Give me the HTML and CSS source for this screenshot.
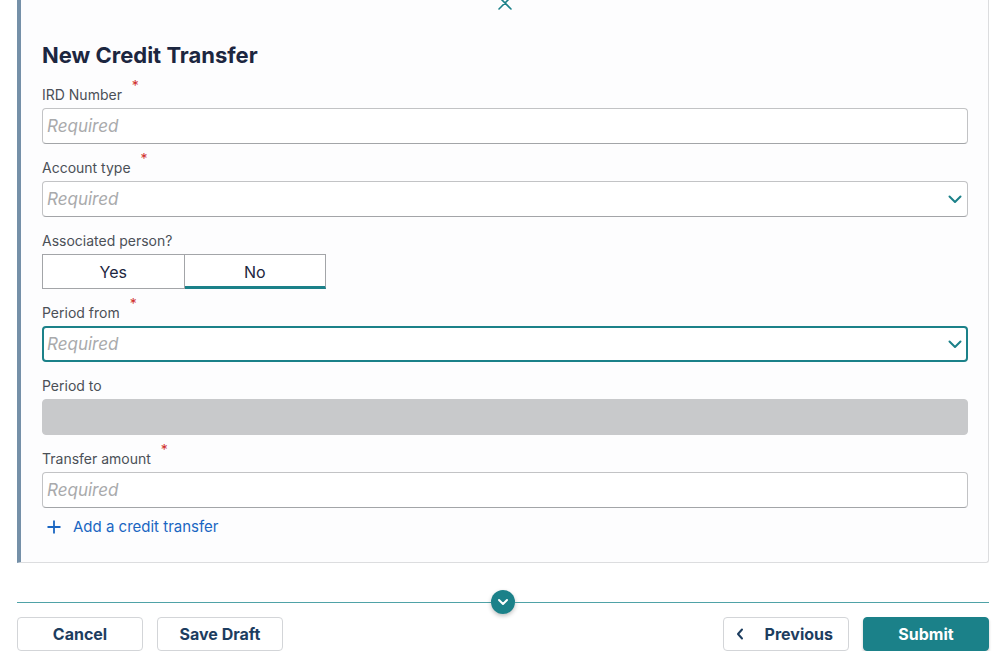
FILE: index.html
```html
<!DOCTYPE html>
<html lang="en">

<head>
    <meta charset="UTF-8">
    <meta name="viewport" content="width=device-width, initial-scale=1.0">
    <title>New Credit Transfer</title>
    <link rel="stylesheet" href="styles.css">
</head>

<body>
    <div class="page">
        <div class="card">
            <div class="close-row">
                <button class="close-btn" aria-label="Close">
                    <svg width="14" height="14" viewBox="0 0 14 14">
                        <path d="M1 1 L13 13 M13 1 L1 13" stroke="#1b8189" stroke-width="1.6" fill="none" stroke-linecap="round" />
                    </svg>
                </button>
            </div>

            <h1 class="title">New Credit Transfer</h1>

            <div class="field">
                <label class="field-label">IRD Number <span class="req">*</span></label>
                <div class="input">Required</div>
            </div>

            <div class="field">
                <label class="field-label">Account type <span class="req">*</span></label>
                <div class="input select">
                    <span>Required</span>
                    <svg class="chevron" width="14" height="9" viewBox="0 0 14 9">
                        <path d="M1.5 1.5 L7 7 L12.5 1.5" stroke="#1b8189" stroke-width="2" fill="none" stroke-linecap="round" stroke-linejoin="round" />
                    </svg>
                </div>
            </div>

            <div class="field">
                <label class="field-label">Associated person?</label>
                <div class="toggle">
                    <button class="toggle-opt">Yes</button>
                    <button class="toggle-opt active">No</button>
                </div>
            </div>

            <div class="field">
                <label class="field-label">Period from <span class="req">*</span></label>
                <div class="input select focused">
                    <span>Required</span>
                    <svg class="chevron" width="14" height="9" viewBox="0 0 14 9">
                        <path d="M1.5 1.5 L7 7 L12.5 1.5" stroke="#1b8189" stroke-width="2" fill="none" stroke-linecap="round" stroke-linejoin="round" />
                    </svg>
                </div>
            </div>

            <div class="field">
                <label class="field-label">Period to</label>
                <div class="input disabled"></div>
            </div>

            <div class="field">
                <label class="field-label">Transfer amount <span class="req">*</span></label>
                <div class="input">Required</div>
            </div>

            <a class="add-link" href="#">
                <svg width="16" height="16" viewBox="0 0 16 16">
                    <path d="M8 1.5 V14.5 M1.5 8 H14.5" stroke="#1a66c2" stroke-width="1.8" fill="none" />
                </svg>
                <span>Add a credit transfer</span>
            </a>
        </div>

        <div class="divider">
            <span class="divider-line"></span>
            <button class="divider-btn" aria-label="Expand">
                <svg width="12" height="8" viewBox="0 0 12 8">
                    <path d="M2 2 L6 6 L10 2" stroke="#fff" stroke-width="2" fill="none" stroke-linecap="round" stroke-linejoin="round" />
                </svg>
            </button>
            <span class="divider-line"></span>
        </div>

        <div class="actions">
            <div class="actions-group">
                <button class="btn">Cancel</button>
                <button class="btn">Save Draft</button>
            </div>
            <div class="actions-group">
                <button class="btn btn-prev">
                    <svg width="8" height="12" viewBox="0 0 8 12">
                        <path d="M6 1.5 L2 6 L6 10.5" stroke="#1d3d5f" stroke-width="2" fill="none" stroke-linecap="round" stroke-linejoin="round" />
                    </svg>
                    <span>Previous</span>
                </button>
                <button class="btn btn-primary">Submit</button>
            </div>
        </div>
    </div>
</body>

</html>
```

FILE: styles.css
```css
* {
    margin: 0;
    padding: 0;
    box-sizing: border-box;
}

body {
    font-family: Inter, 'Noto Sans', sans-serif;
    background: #ffffff;
    color: #1c2640;
}

.page {
    padding: 0 11px 0 17px;
}

.card {
    background: #fdfdfe;
    border-left: 4px solid #7590a8;
    border-right: 1px solid #dcdddf;
    border-bottom: 1px solid #dcdddf;
    border-bottom-right-radius: 3px;
    padding: 0 20px 25px 21px;
}

.close-row {
    display: flex;
    justify-content: center;
    height: 10px;
}

.close-btn {
    background: none;
    border: none;
    margin-top: -4px;
    height: 14px;
}

.title {
    font-size: 22px;
    font-weight: 700;
    line-height: 28px;
    color: #1c2640;
    margin-top: 31px;
    margin-bottom: 16px;
}

.field {
    margin-bottom: 14px;
}

.field-label {
    display: block;
    font-size: 14px;
    line-height: 20px;
    color: #4b5057;
    margin-bottom: 3px;
}

.req {
    color: #d0312d;
    font-size: 14px;
    position: relative;
    top: -9px;
    left: 6px;
}

.input {
    height: 36px;
    border: 1px solid #c2c3c5;
    border-bottom-color: #a3a5a8;
    border-radius: 4px;
    background: #fff;
    padding: 0 4px;
    display: flex;
    align-items: center;
    font-size: 17px;
    font-style: italic;
    color: #a9aaac;
}

.select {
    justify-content: space-between;
    padding-right: 5px;
}

.focused {
    border: 2px solid #1b8189;
    padding-left: 3px;
    padding-right: 4px;
}

.disabled {
    background: #c8c9cb;
    border-color: #c8c9cb;
}

.toggle {
    display: flex;
    width: 284px;
    height: 35px;
}

.toggle-opt {
    flex: 1;
    font-family: inherit;
    font-size: 16px;
    color: #1c2640;
    background: #fff;
    border: 1px solid #a3a5a8;
}

.toggle-opt + .toggle-opt {
    border-left: none;
}

.toggle-opt.active {
    border-bottom: 3px solid #1b8189;
    padding-top: 2px;
}

.add-link {
    display: flex;
    align-items: center;
    gap: 11px;
    margin-top: -5px;
    padding-left: 4px;
    font-size: 15px;
    line-height: 20px;
    color: #1a66c2;
    text-decoration: none;
}

.divider {
    display: flex;
    align-items: center;
    margin-top: 27px;
    height: 24px;
}

.divider-line {
    flex: 1;
    height: 1px;
    background: #4fa2a7;
}

.divider-btn {
    width: 24px;
    height: 24px;
    border-radius: 50%;
    border: none;
    background: #1b8189;
    box-shadow: 0 2px 4px rgba(0, 0, 0, 0.25);
    display: flex;
    align-items: center;
    justify-content: center;
}

.actions {
    display: flex;
    justify-content: space-between;
    margin-top: 3px;
}

.actions-group {
    display: flex;
    gap: 14px;
}

.btn {
    width: 126px;
    height: 34px;
    font-family: inherit;
    font-size: 16px;
    font-weight: 700;
    color: #1d3d5f;
    background: #fff;
    border: 1px solid #d3d5d8;
    border-radius: 4px;
}

.btn-prev {
    display: flex;
    align-items: center;
    padding: 0 15px 0 12px;
}

.btn-prev span {
    flex: 1;
    text-align: right;
}

.btn-primary {
    background: #1b8189;
    border-color: #1b8189;
    color: #fff;
    box-shadow: 0 2px 3px rgba(0, 0, 0, 0.2);
}
```
